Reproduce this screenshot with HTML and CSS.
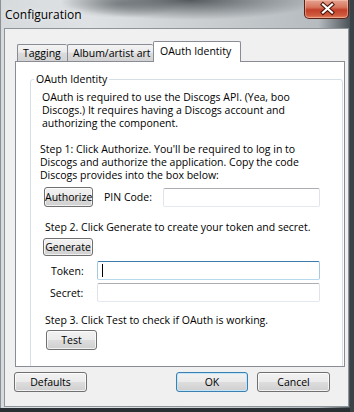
FILE: index.html
```html
<!DOCTYPE html>
<html lang="en">
<head>
    <meta charset="UTF-8">
    <meta name="viewport" content="width=device-width, initial-scale=1.0">
    <title>Configuration</title>
    <link rel="stylesheet" href="styles.css">
</head>
<body>
    <div class="window">
        <!-- Title bar -->
        <div class="titlebar">
            <span class="title">Configuration</span>
            <div class="close">
                <svg width="45" height="19" viewBox="0 0 45 19">
                    <path d="M18 5.5 L27 13.5 M27 5.5 L18 13.5" stroke="#4a1309" stroke-width="4.2" stroke-linecap="square" fill="none"/>
                    <path d="M18 5.5 L27 13.5 M27 5.5 L18 13.5" stroke="#ffffff" stroke-width="2.2" stroke-linecap="square" fill="none"/>
                </svg>
            </div>
        </div>

        <div class="client">
            <!-- Tabs -->
            <div class="tabs">
                <div class="tab tab-tagging">Tagging</div>
                <div class="tab tab-art">Album/artist art</div>
                <div class="tab tab-oauth active">OAuth Identity</div>
            </div>

            <div class="panel">
                <fieldset class="group">
                    <legend>OAuth Identity</legend>

                    <p class="intro">OAuth is required to use the Discogs API. (Yea, boo<br>Discogs.) It requires having a Discogs account and<br>authorizing the component.</p>

                    <p class="step1">Step 1: Click Authorize. You'll be required to log in to<br>Discogs and authorize the application. Copy the code<br>Discogs provides into the box below:</p>

                    <div class="pin-row">
                        <button class="btn btn-authorize">Authorize</button>
                        <label class="pin-label" for="pin">PIN Code:</label>
                        <input class="textbox pin-box" id="pin" type="text">
                    </div>

                    <p class="step2">Step 2. Click Generate to create your token and secret.</p>
                    <button class="btn btn-generate">Generate</button>

                    <div class="field field-token">
                        <label class="field-label" for="token">Token:</label>
                        <div class="textbox focused" id="token"><span class="caret"></span></div>
                    </div>
                    <div class="field field-secret">
                        <label class="field-label" for="secret">Secret:</label>
                        <input class="textbox" id="secret" type="text">
                    </div>

                    <p class="step3">Step 3. Click Test to check if OAuth is working.</p>
                    <button class="btn btn-test">Test</button>
                </fieldset>
            </div>

            <!-- Dialog buttons -->
            <div class="footer">
                <button class="btn btn-dialog">Defaults</button>
                <div class="footer-right">
                    <button class="btn btn-dialog default">OK</button>
                    <button class="btn btn-dialog">Cancel</button>
                </div>
            </div>
        </div>
    </div>
</body>
</html>
```

FILE: styles.css
```css
body {
    margin: 0;
    font-family: "Open Sans", "Noto Sans", sans-serif;
    font-size: 10.5px;
    color: #000;
    overflow: hidden;
}

.window {
    width: 354px;
    height: 412px;
    display: flex;
    flex-direction: column;
    box-sizing: border-box;
    background:
        radial-gradient(ellipse 130px 20px at 190px 0px, rgba(70, 76, 80, 0.9), rgba(70, 76, 80, 0)),
        radial-gradient(ellipse 60px 14px at 120px 4px, rgba(90, 96, 100, 0.5), rgba(90, 96, 100, 0)),
        linear-gradient(to right, #d6dadc 0%, #dfe2e4 25%, #c9cdd0 60%, #b5bbbf 90%, #4a5156 99%);
    box-shadow: inset -4px 0 0 #3b4247, inset 0 -4px 0 #2a2f33, inset 1px 0 0 #8a9196;
}

/* ---------- title bar ---------- */

.titlebar {
    height: 28px;
    display: flex;
    justify-content: space-between;
    align-items: flex-start;
    padding: 0 5px 0 5px;
}

.title {
    font-size: 12px;
    line-height: 30px;
    color: #000;
    text-shadow: 0 0 6px rgba(255, 255, 255, 0.8);
}

.close {
    width: 45px;
    height: 19px;
    box-sizing: border-box;
    border: 1px solid #5a2116;
    border-top: none;
    border-radius: 0 0 5px 5px;
    background: linear-gradient(#e5a392 0%, #d7765e 40%, #c3402a 55%, #cf5a3d 85%, #e28466 100%);
    box-shadow: inset 0 0 0 1px rgba(255, 210, 190, 0.45);
}

.close svg {
    display: block;
    margin-top: -1px;
}

/* ---------- client area ---------- */

.client {
    flex: 1;
    margin: 0 5px 5px 4px;
    background: #f0f0f0;
    border: 1px solid #8d959a;
    padding-top: 12px;
}

.tabs {
    display: flex;
    align-items: flex-end;
    margin-left: 12px;
    height: 20px;
    position: relative;
    z-index: 1;
}

.tab {
    box-sizing: border-box;
    height: 17px;
    border: 1px solid #898c95;
    border-bottom: none;
    border-right: none;
    border-radius: 2px 2px 0 0;
    background: linear-gradient(#f3f3f3 0%, #ebebeb 45%, #dcdcdc 50%, #d2d2d2 100%);
    padding-left: 5px;
    line-height: 16px;
    white-space: nowrap;
}

.tab-tagging {
    width: 50px;
}

.tab-art {
    width: 86px;
}

.tab.active {
    width: 88px;
    height: 21px;
    margin-bottom: -1px;
    border-right: 1px solid #898c95;
    background: #fff;
    padding-left: 6px;
    line-height: 18px;
}

.panel {
    box-sizing: border-box;
    height: 306px;
    margin: 0 3px 0 10px;
    border: 1px solid #898c95;
    background: #fff;
    overflow: hidden;
}

/* ---------- group box ---------- */

.group {
    margin: 10px 1px 0 14px;
    padding: 0;
    height: 320px;
    border: 1px solid #d5dfe5;
    border-radius: 3px;
}

.group legend {
    margin-left: 3px;
    padding: 0 2px;
    line-height: 14px;
}

.group p {
    margin: 0;
    line-height: 13px;
    white-space: nowrap;
}

.intro {
    padding-top: 5px;
    padding-left: 11px;
}

.step1 {
    margin-top: 13px !important;
    padding-left: 9px;
}

.pin-row {
    display: flex;
    align-items: center;
    margin: 5px 0 0 13px;
}

.pin-label {
    margin-left: 11px;
    width: 59px;
}

.step2 {
    margin-top: 14px !important;
    padding-left: 14px;
}

.step3 {
    margin-top: 12px !important;
    padding-left: 14px;
}

.field {
    display: flex;
    align-items: center;
    height: 19px;
}

.field-token {
    margin-top: 5px;
    padding-left: 20px;
}

.field-secret {
    margin-top: 3px;
    padding-left: 19px;
}

.field-token .field-label {
    width: 46px;
}

.field-secret .field-label {
    width: 47px;
}

/* ---------- controls ---------- */

.btn {
    display: block;
    box-sizing: border-box;
    height: 20px;
    padding: 0;
    font-family: inherit;
    font-size: 10.5px;
    color: #000;
    border: 1px solid #707070;
    border-radius: 3px;
    background: linear-gradient(#f2f2f2 0%, #ebebeb 48%, #dddddd 52%, #cfcfcf 100%);
    box-shadow: inset 0 0 0 1px rgba(255, 255, 255, 0.7);
}

.btn-authorize {
    width: 49px;
}

.btn-generate {
    width: 50px;
    height: 18px;
    margin: 4px 0 0 12px;
}

.btn-test {
    width: 51px;
    margin: 3px 0 0 15px;
}

.textbox {
    box-sizing: border-box;
    height: 19px;
    margin: 0;
    padding: 0;
    border: 1px solid #e2e3ea;
    border-top-color: #abadb3;
    border-bottom-color: #e3e9ef;
    border-radius: 2px;
    background: #fff;
}

.pin-box {
    width: 157px;
}

.field .textbox {
    width: 223px;
}

.textbox.focused {
    border-color: #a4c9e3;
    border-top-color: #3d7bad;
    border-bottom-color: #b7d9ed;
    position: relative;
}

.caret {
    position: absolute;
    left: 4px;
    top: 2px;
    width: 1px;
    height: 13px;
    background: #000;
}

/* ---------- dialog buttons ---------- */

.footer {
    display: flex;
    justify-content: space-between;
    margin-top: 5px;
    padding: 0 18px 0 9px;
}

.footer-right {
    display: flex;
    gap: 9px;
}

.btn-dialog {
    width: 73px;
}

.btn-dialog.default {
    width: 72px;
    border-color: #3c7fb1;
    box-shadow: inset 0 0 0 1px #c2e5f8;
}
```
